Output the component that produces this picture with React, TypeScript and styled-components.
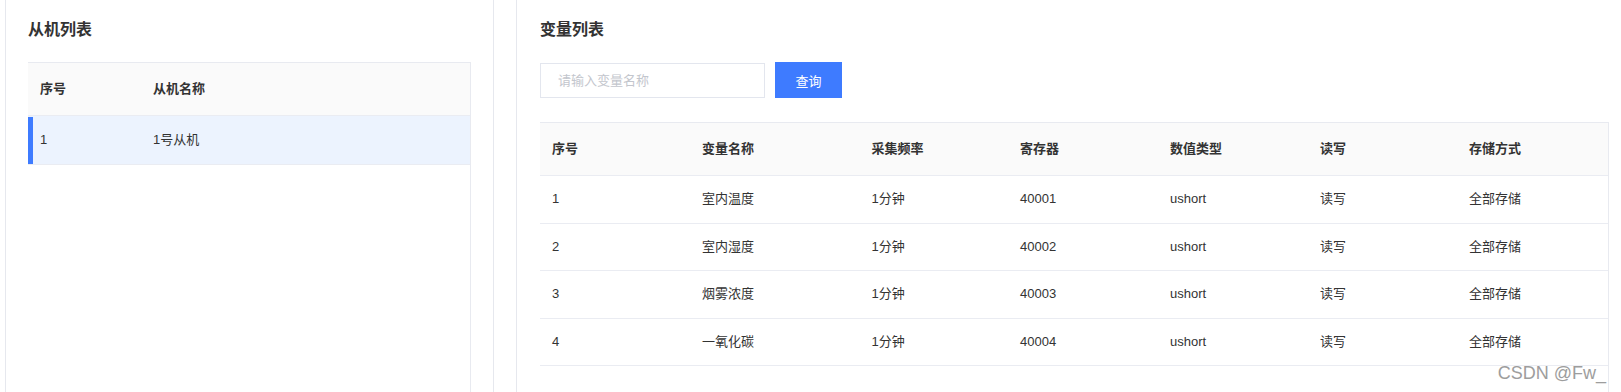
import React from "react";
import styled, { createGlobalStyle } from "styled-components";

const Global = createGlobalStyle`
  html, body { margin: 0; padding: 0; background: #fff; }
  body {
    width: 1621px;
    height: 392px;
    overflow: hidden;
    font-family: "Liberation Sans", "Noto Sans CJK SC", sans-serif;
    color: #333;
  }
  * { box-sizing: border-box; }
`;

const Page = styled.div`
  position: relative;
  display: flex;
  align-items: stretch;
  gap: 22px;
  height: 392px;
  padding-left: 5px;
`;

const Panel = styled.section<{ $width: number; $pad: number }>`
  flex: none;
  width: ${(p) => p.$width}px;
  display: flex;
  flex-direction: column;
  border-left: 1px solid #e6e8ee;
  border-right: 1px solid #e6e8ee;
  padding: 18px ${(p) => p.$pad}px 0 ${(p) => p.$pad}px;
`;

const Title = styled.h2`
  margin: 0;
  font-size: 16px;
  line-height: 24px;
  font-weight: 700;
  color: #333;
`;

const Toolbar = styled.div`
  display: flex;
  align-items: center;
  gap: 10px;
  margin-top: 20px;
`;

const SearchInput = styled.input`
  width: 225px;
  height: 35px;
  margin-top: 1px;
  border: 1px solid #e3e6ee;
  border-radius: 0;
  padding: 0 17px;
  font-family: inherit;
  font-size: 13px;
  color: #333;
  outline: none;
  &::placeholder { color: #c3c6cd; }
`;

const Button = styled.button`
  width: 67px;
  height: 36px;
  border: none;
  border-radius: 0;
  background: #3e7bff;
  color: #fff;
  font-family: inherit;
  font-size: 13px;
  padding: 0;
  cursor: pointer;
`;

const Table = styled.div<{ $mt: number }>`
  flex: 1;
  margin-top: ${(p) => p.$mt}px;
  border-top: 1px solid #e8eaf0;
  border-right: 1px solid #e8eaf0;
  display: flex;
  flex-direction: column;
`;

const Row = styled.div<{ $cols: string; $h: number; $head?: boolean; $active?: boolean }>`
  position: relative;
  display: grid;
  grid-template-columns: ${(p) => p.$cols};
  align-items: center;
  height: ${(p) => p.$h}px;
  flex: none;
  border-bottom: 1px solid #eaecf2;
  background: ${(p) => (p.$head ? "#fafafa" : p.$active ? "#ecf3fe" : "#fff")};
  font-size: 13px;
  font-weight: ${(p) => (p.$head ? 700 : 400)};
  color: #333;
  ${(p) =>
    p.$active
      ? `&::before { content: ""; position: absolute; left: 0; top: 1px; bottom: 0; width: 5px; background: #3e7bff; }`
      : ""}
`;

const Cell = styled.div`
  padding-left: 12px;
  white-space: nowrap;
  line-height: 20px;
`;

const Watermark = styled.div`
  position: absolute;
  right: 15px;
  bottom: 9px;
  font-family: "Liberation Sans", sans-serif;
  font-size: 18px;
  line-height: 20px;
  color: #9d9d9d;
  text-shadow: 0 0 2px #fff;
`;

const slaveCols = "113px 1fr";
const varCols = "150px 169.5px 148.5px 150px 150px 149px 1fr";

const variables = [
  ["1", "室内温度", "1分钟", "40001", "ushort", "读写", "全部存储"],
  ["2", "室内湿度", "1分钟", "40002", "ushort", "读写", "全部存储"],
  ["3", "烟雾浓度", "1分钟", "40003", "ushort", "读写", "全部存储"],
  ["4", "一氧化碳", "1分钟", "40004", "ushort", "读写", "全部存储"],
];

const varHead = ["序号", "变量名称", "采集频率", "寄存器", "数值类型", "读写", "存储方式"];

export default function App() {
  return (
    <>
      <Global />
      <Page>
        <Panel $width={489} $pad={22}>
          <Title>从机列表</Title>
          <Table $mt={20}>
            <Row $cols={slaveCols} $h={53} $head>
              <Cell>序号</Cell>
              <Cell>从机名称</Cell>
            </Row>
            <Row $cols={slaveCols} $h={49} $active>
              <Cell>1</Cell>
              <Cell>1号从机</Cell>
            </Row>
          </Table>
        </Panel>
        <Panel $width={1117} $pad={23}>
          <Title>变量列表</Title>
          <Toolbar>
            <SearchInput placeholder="请输入变量名称" />
            <Button>查询</Button>
          </Toolbar>
          <Table $mt={24}>
            <Row $cols={varCols} $h={53} $head>
              {varHead.map((h) => (
                <Cell key={h}>{h}</Cell>
              ))}
            </Row>
            {variables.map((r) => (
              <Row key={r[0]} $cols={varCols} $h={47.5}>
                {r.map((c, i) => (
                  <Cell key={i}>{c}</Cell>
                ))}
              </Row>
            ))}
          </Table>
        </Panel>
        <Watermark>CSDN @Fw_</Watermark>
      </Page>
    </>
  );
}
